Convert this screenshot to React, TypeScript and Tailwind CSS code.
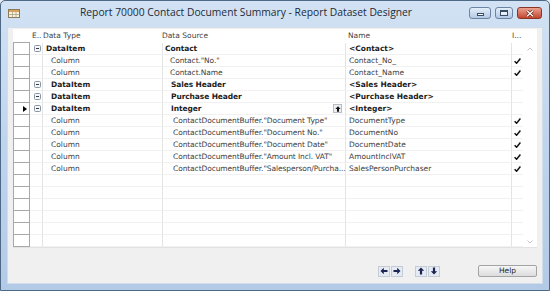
import React from "react";

const gridFont = { fontFamily: '"DejaVu Sans", Verdana, sans-serif' };

type Row = {
  type?: string;
  bold?: boolean;
  typePad?: string;
  src?: string;
  srcPad?: string;
  name?: string;
  check?: boolean;
  current?: boolean;
  upBtn?: boolean;
  expand?: boolean;
};

const rows: Row[] = [
  { type: "DataItem", bold: true, typePad: "pl-[3px]", src: "Contact", srcPad: "pl-[2px]", name: "<Contact>", expand: true },
  { type: "Column", typePad: "pl-[8px]", src: 'Contact."No."', srcPad: "pl-[7px]", name: "Contact_No_", check: true },
  { type: "Column", typePad: "pl-[8px]", src: "Contact.Name", srcPad: "pl-[7px]", name: "Contact_Name", check: true },
  { type: "DataItem", bold: true, typePad: "pl-[8px]", src: "Sales Header", srcPad: "pl-[8px]", name: "<Sales Header>", expand: true },
  { type: "DataItem", bold: true, typePad: "pl-[8px]", src: "Purchase Header", srcPad: "pl-[8px]", name: "<Purchase Header>", expand: true },
  { type: "DataItem", bold: true, typePad: "pl-[8px]", src: "Integer", srcPad: "pl-[8px]", name: "<Integer>", expand: true, current: true, upBtn: true },
  { type: "Column", typePad: "pl-[8px]", src: 'ContactDocumentBuffer."Document Type"', srcPad: "pl-[10px]", name: "DocumentType", check: true },
  { type: "Column", typePad: "pl-[8px]", src: 'ContactDocumentBuffer."Document No."', srcPad: "pl-[10px]", name: "DocumentNo", check: true },
  { type: "Column", typePad: "pl-[8px]", src: 'ContactDocumentBuffer."Document Date"', srcPad: "pl-[10px]", name: "DocumentDate", check: true },
  { type: "Column", typePad: "pl-[8px]", src: 'ContactDocumentBuffer."Amount Incl. VAT"', srcPad: "pl-[10px]", name: "AmountInclVAT", check: true },
  { type: "Column", typePad: "pl-[8px]", src: 'ContactDocumentBuffer."Salesperson/Purcha...', srcPad: "pl-[10px]", name: "SalesPersonPurchaser", check: true },
  {}, {}, {}, {}, {}, {},
];

const MinusBox = () => (
  <svg width="7" height="7" viewBox="0 0 7 7">
    <rect x="0.5" y="0.5" width="6" height="6" rx="1" fill="#f4f6f8" stroke="#8b96a4" />
    <path d="M2 3.5 H5" stroke="#3a3a3a" strokeWidth="1" />
  </svg>
);

const Check = () => (
  <svg width="7" height="6" viewBox="0 0 7 6">
    <path d="M0.6 3.2 L2.6 5.2 L6.4 0.6" stroke="#111" strokeWidth="1.5" fill="none" />
  </svg>
);

const Tri = () => (
  <svg width="4" height="6" viewBox="0 0 4 6">
    <path d="M0 0 L4 3 L0 6 Z" fill="#000" />
  </svg>
);

const Arrow = ({ dir }: { dir: "left" | "right" | "up" | "down" }) => {
  const rot = { left: 0, right: 180, up: 90, down: 270 }[dir];
  return (
    <svg width="8" height="8" viewBox="0 0 8 8" style={{ transform: `rotate(${rot}deg)` }}>
      <path d="M0.5 4 L3.8 0.8 L3.8 2.9 L7.5 2.9 L7.5 5.1 L3.8 5.1 L3.8 7.2 Z" fill="#1b2452" />
    </svg>
  );
};

const NavBtn = ({ dir }: { dir: "left" | "right" | "up" | "down" }) => (
  <div className="w-[12px] h-[11px] flex items-center justify-center bg-[#e6ebf3] border border-[#c4ccd8]">
    <Arrow dir={dir} />
  </div>
);

const WinIcon = () => (
  <svg width="12" height="9" viewBox="0 0 12 9">
    <rect x="0.5" y="0.5" width="11" height="8" fill="#f7f1e1" stroke="#8a7a5a" />
    <rect x="1" y="1" width="10" height="2" fill="#d9a45a" />
    <path d="M1 5.5 H11 M4.5 3 V8.5 M8 3 V8.5" stroke="#a89a7a" strokeWidth="0.7" />
  </svg>
);

function GridRow({ r }: { r: Row }) {
  const txt = r.bold ? "font-bold text-[#1c1c1c]" : "text-[#3c3c3c]";
  return (
    <div className="flex h-[12px] text-[7.5px] leading-[11px]">
      <div className="w-[17px] bg-white border-l border-r border-b border-[#a8a8a8] flex items-center justify-end pr-[2px]">
        {r.current && <Tri />}
      </div>
      <div className="w-[12px] flex items-center justify-center border-b border-[#f1f1f1] pl-[2px]">
        {r.expand && <MinusBox />}
      </div>
      <div className={`w-[120px] border-l border-b border-l-[#e4e4e4] border-b-[#f1f1f1] flex items-center whitespace-nowrap ${r.typePad ?? ""} ${txt}`}>
        {r.type}
      </div>
      <div className={`w-[183px] border-l border-b border-l-[#e4e4e4] border-b-[#f1f1f1] flex items-center whitespace-nowrap ${r.srcPad ?? ""} ${txt}`}>
        <span className="flex-1 tracking-[-0.1px]">{r.src}</span>
        {r.upBtn && (
          <span className="w-[9px] h-[9px] mr-[3px] flex items-center justify-center bg-[#eceef2] border border-[#b8bcc4]">
            <svg width="6" height="6" viewBox="0 0 6 6">
              <path d="M3 0.3 L5.6 3 L4 3 L4 5.8 L2 5.8 L2 3 L0.4 3 Z" fill="#111" />
            </svg>
          </span>
        )}
      </div>
      <div className={`w-[166px] border-l border-b border-l-[#e4e4e4] border-b-[#f1f1f1] flex items-center whitespace-nowrap pl-[3px] ${txt}`}>
        {r.name}
      </div>
      <div className="w-[12px] border-l border-b border-l-[#e4e4e4] border-b-[#f1f1f1] flex items-center justify-center">
        {r.check && <Check />}
      </div>
    </div>
  );
}

export default function App() {
  return (
    <div className="w-[550px] h-[291px] overflow-hidden bg-[#e9eef5]">
      <div className="w-full h-full flex flex-col border border-[#4e6985] rounded-t-[5px] bg-gradient-to-b from-[#d2e2f4] via-[#bfd4ed] to-[#b3cae6]">
        {/* Title bar */}
        <div className="h-[26px] flex items-start shrink-0">
          <div className="w-[22px] pl-[7px] pt-[8px]">
            <WinIcon />
          </div>
          <div
            className="flex-1 text-center pt-[4px] text-[10.3px] text-[#1e2a36] whitespace-nowrap"
            style={{ fontFamily: '"Open Sans", "Noto Sans", sans-serif' }}
          >
            Report 70000 Contact Document Summary - Report Dataset Designer
          </div>
          <div className="flex items-start pt-[6px] pr-[7px] gap-[4px]">
            <div className="w-[22px] h-[12px] rounded-[3px] border border-[#6b84a3] bg-gradient-to-b from-[#e4edf8] to-[#b3c9e4] flex items-center justify-center">
              <div className="w-[7px] h-[3px] mt-[3px] bg-white border border-[#3a4d66]" />
            </div>
            <div className="w-[18px] h-[12px] rounded-[3px] border border-[#6b84a3] bg-gradient-to-b from-[#e4edf8] to-[#b3c9e4] flex items-center justify-center">
              <div className="w-[8px] h-[6px] border border-[#3a4d66] bg-white/60 border-t-2" />
            </div>
            <div className="w-[25px] h-[12px] rounded-[3px] border border-[#8a3526] bg-gradient-to-b from-[#eaa190] to-[#c3452e] flex items-center justify-center">
              <svg width="8" height="7" viewBox="0 0 8 7">
                <path d="M1 0.8 L7 6.2 M7 0.8 L1 6.2" stroke="#5a1a10" strokeWidth="2.6" />
                <path d="M1 0.8 L7 6.2 M7 0.8 L1 6.2" stroke="#fff" strokeWidth="1.4" />
              </svg>
            </div>
          </div>
        </div>

        {/* Client area */}
        <div className="mx-[6px] flex-1 bg-[#f0f0f0] border border-[#d3dde9] flex flex-col px-[5px] pt-[1px]" style={gridFont}>
          <div className="w-[524px] bg-white border-b border-[#e2e2e2]">
            {/* header */}
            <div className="flex h-[14px] items-center text-[7.5px] text-[#444] whitespace-nowrap">
              <div className="w-[17px] h-full border-b border-[#a8a8a8]" />
              <div className="w-[12px] pl-[2px]">E..</div>
              <div className="w-[120px] pl-[1px]">Data Type</div>
              <div className="w-[183px]">Data Source</div>
              <div className="w-[166px] pl-[3px]">Name</div>
              <div className="w-[12px] pl-[1px]">I...</div>
              <div className="w-[14px]" />
            </div>
            <div className="flex">
              <div className="flex flex-col w-[510px]">
                {rows.map((r, i) => (
                  <GridRow key={i} r={r} />
                ))}
              </div>
              <div className="w-[14px] flex flex-col justify-between items-center pt-[4px] pb-[3px]">
                <svg width="6" height="4" viewBox="0 0 6 4">
                  <path d="M0.5 3.5 L3 1 L5.5 3.5" stroke="#c4c4c4" fill="none" />
                </svg>
                <svg width="6" height="4" viewBox="0 0 6 4">
                  <path d="M0.5 0.5 L3 3 L5.5 0.5" stroke="#c4c4c4" fill="none" />
                </svg>
              </div>
            </div>
          </div>

          {/* bottom buttons */}
          <div className="flex items-center justify-end mt-[17px] h-[12px] w-[524px]">
            <div className="flex gap-[1px]">
              <NavBtn dir="left" />
              <NavBtn dir="right" />
            </div>
            <div className="flex gap-[1px] ml-[12px]">
              <NavBtn dir="up" />
              <NavBtn dir="down" />
            </div>
            <div className="ml-[38px] w-[59px] h-[12px] rounded-[2px] border border-[#a3a3a3] bg-gradient-to-b from-[#f6f6f6] to-[#dcdcdc] flex items-center justify-center text-[7.5px] text-[#222]">
              Help
            </div>
          </div>
        </div>
        <div className="h-[6px] shrink-0" />
      </div>
    </div>
  );
}
